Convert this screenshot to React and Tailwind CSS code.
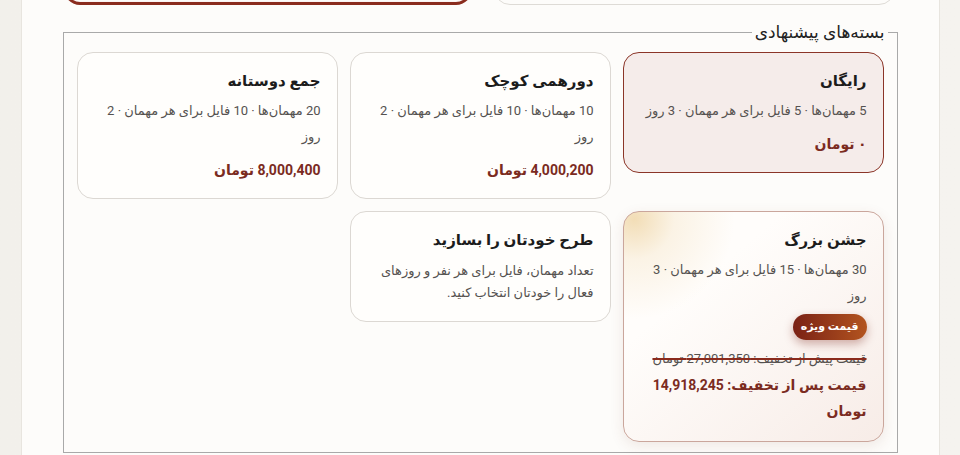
import clsx from 'clsx';

const PACKAGES = [
  { title: 'رایگان', desc: '5 مهمان‌ها · 5 فایل برای هر مهمان · 3 روز', price: '۰ تومان', selected: true },
  { title: 'دورهمی کوچک', desc: '10 مهمان‌ها · 10 فایل برای هر مهمان · 2 روز', price: '4,000,200 تومان' },
  { title: 'جمع دوستانه', desc: '20 مهمان‌ها · 10 فایل برای هر مهمان · 2 روز', price: '8,000,400 تومان' },
];

function PackageCard({ title, desc, price, selected }) {
  return (
    <div
      className={clsx(
        'rounded-2xl border px-4 pt-[17px] pb-[17px]',
        selected ? 'border-[#8b3528] bg-[#f5ecea]' : 'border-[#dcd8d3] bg-[#fffefc]'
      )}
    >
      <h3 className="text-[15px] font-bold leading-[22px] text-[#1c1c1c]">{title}</h3>
      <p className="mt-[6px] text-[13px] leading-[26px] text-[#555250]">{desc}</p>
      <p className="mt-[9px] text-[14px] font-bold leading-[22px] text-[#7b2b1f]">{price}</p>
    </div>
  );
}

function CustomCard() {
  return (
    <div className="rounded-2xl border border-[#dcd8d3] bg-[#fffefc] px-4 pt-[17px] pb-[17px]">
      <h3 className="text-[15px] font-bold leading-[22px] text-[#1c1c1c]">طرح خودتان را بسازید</h3>
      <p className="mt-[9px] text-[13px] leading-[22px] text-[#555250]">
        تعداد مهمان، فایل برای هر نفر و روزهای فعال را خودتان انتخاب کنید.
      </p>
    </div>
  );
}

function SpecialCard() {
  return (
    <div className="rounded-2xl border border-[#caa69c] bg-[radial-gradient(circle_at_4%_3%,#f2ddb6_0%,rgba(248,236,214,0.6)_12%,transparent_30%),linear-gradient(140deg,#fffdfb_30%,#f7ece7_100%)] px-4 pt-[17px] pb-[17px] shadow-[0_4px_14px_rgba(120,60,40,0.10)]">
      <h3 className="text-[15px] font-bold leading-[22px] text-[#1c1c1c]">جشن بزرگ</h3>
      <p className="mt-[6px] text-[13px] leading-[26px] text-[#555250]">30 مهمان‌ها · 15 فایل برای هر مهمان · 3 روز</p>
      <div className="mt-[5px] flex">
        <span className="flex h-[26px] items-center rounded-full bg-gradient-to-r from-[#7a2115] to-[#b3541f] px-[8px] text-[11px] font-bold text-white shadow-[0_4px_10px_rgba(122,35,22,0.35)]">
          قیمت ویژه
        </span>
      </div>
      <p className="mt-[6px] text-[13px] leading-[26px] text-[#555250] line-through decoration-[#8a2a1c] decoration-2">
        قیمت پیش از تخفیف: 27,001,350 تومان
      </p>
      <p className="text-[14px] font-bold leading-[26px] text-[#7b2b1f]">
        <span className="whitespace-nowrap">قیمت پس از تخفیف: 14,918,245</span>
        <br />
        تومان
      </p>
    </div>
  );
}

export default function App() {
  return (
    <div
      dir="rtl"
      className="min-h-screen bg-gradient-to-r from-[#f2f0eb] to-[#f5f3ef] font-['Roboto','DejaVu_Sans',sans-serif]"
    >
      <div className="mx-auto min-h-screen w-[919px] border-x border-[#e8e5df] bg-[#fdfcfa]">
        <div className="flex h-[5px] items-end gap-[22px] pr-[44px] pl-[42px]">
          <div className="h-12 flex-1 shrink-0 rounded-2xl border border-[#dedbd6] bg-[#fdfcfa]" />
          <div className="h-12 w-[408px] shrink-0 rounded-2xl border-[3px] border-[#8a2c1e] bg-[#fdfcfa] shadow-[inset_0_0_0_1px_#fbf4f2]" />
        </div>
        <fieldset className="mx-[41px] mt-[16px] border border-[#a9a9a9]">
          <legend className="mr-[9px] px-[3px] text-[17px] leading-[22px] text-[#222]">بسته‌های پیشنهادی</legend>
          <div className="grid grid-cols-3 items-start gap-3 px-[13px] pt-[9px] pb-[10px]">
            {PACKAGES.map((p) => (
              <PackageCard key={p.title} {...p} />
            ))}
            <SpecialCard />
            <CustomCard />
          </div>
        </fieldset>
      </div>
    </div>
  );
}
